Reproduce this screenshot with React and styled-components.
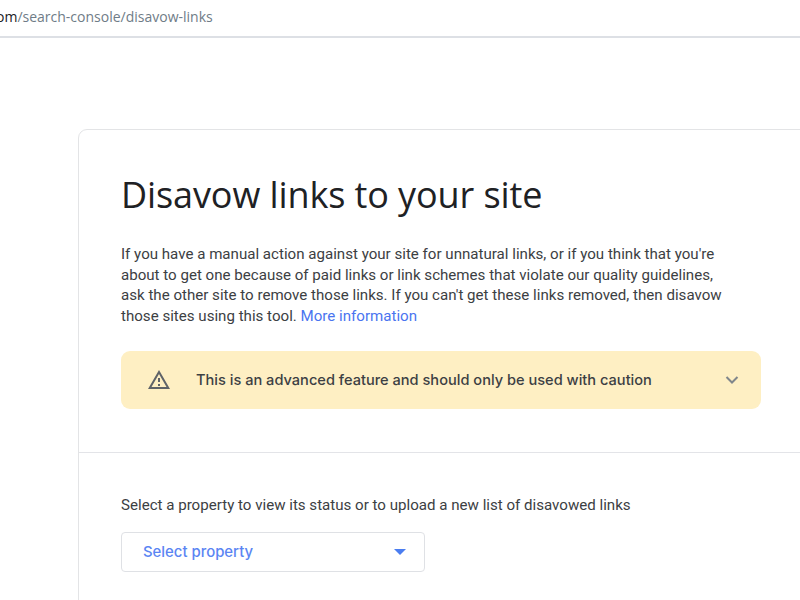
import React from 'react';
import styled, { createGlobalStyle } from 'styled-components';

const GlobalStyle = createGlobalStyle`
  html, body {
    margin: 0;
    height: 100%;
    overflow: hidden;
    background: #ffffff;
    font-family: Roboto, sans-serif;
  }
`;

const Page = styled.div`
  width: 800px;
  height: 600px;
  overflow: hidden;
`;

const AddressBar = styled.div`
  box-sizing: border-box;
  height: 38px;
  border-bottom: 2px solid #dde0e5;
  padding-top: 7px;
  overflow: hidden;
  white-space: nowrap;
  font-family: 'Open Sans', sans-serif;
  font-size: 14px;
  line-height: 20px;
`;

const Host = styled.span`
  display: inline-block;
  margin-left: -4px;
  color: #202124;
`;

const UrlPath = styled.span`
  color: #6f7c87;
`;

const Card = styled.main`
  box-sizing: border-box;
  width: 760px;
  height: 520px;
  margin: 91px 0 0 78px;
  border: 1px solid #e3e4e6;
  border-radius: 9px 0 0 0;
`;

const Intro = styled.section`
  box-sizing: border-box;
  height: 323px;
  padding: 41px 76px 0 42px;
  border-bottom: 1px solid #e3e4e8;
`;

const Title = styled.h1`
  margin: 0 0 25px;
  font-family: 'Open Sans', sans-serif;
  font-size: 36px;
  line-height: 48px;
  font-weight: 400;
  letter-spacing: -0.1px;
  color: #202124;
`;

const Body = styled.p`
  margin: 0 0 24px;
  font-size: 15.1px;
  line-height: 20.7px;
  white-space: nowrap;
  color: #3c4043;
`;

const MoreLink = styled.a`
  color: #4a74f0;
  text-decoration: none;
`;

const Warning = styled.div`
  box-sizing: border-box;
  height: 58px;
  display: flex;
  align-items: center;
  padding: 0 22px 0 26px;
  border-radius: 9px;
  background: #feefc3;
`;

const WarningText = styled.span`
  flex: 1;
  margin-left: 25px;
  font-family: Inter, sans-serif;
  font-size: 14.6px;
  font-weight: 500;
  color: #3c4043;
`;

const Selector = styled.section`
  padding: 42px 0 0 42px;
`;

const SelectLabel = styled.div`
  margin-bottom: 17px;
  font-size: 15.1px;
  line-height: 20px;
  color: #3c4043;
`;

const SelectBox = styled.div`
  box-sizing: border-box;
  width: 304px;
  height: 40px;
  display: flex;
  align-items: center;
  justify-content: space-between;
  padding: 0 18px 1px 21px;
  border: 1px solid #dfe1e5;
  border-radius: 4px;
  font-family: Inter, sans-serif;
  font-size: 14.9px;
  font-weight: 500;
  color: #5b85f3;
`;

const WarningIcon = () => (
  <svg width="24" height="24" viewBox="0 0 24 24" fill="#5f6368">
    <path d="M12 5.99 19.53 19H4.47L12 5.99M12 2 1 21h22L12 2zm1 14h-2v2h2v-2zm0-6h-2v4h2v-4z" />
  </svg>
);

const ChevronIcon = () => (
  <svg width="14" height="10" viewBox="0 0 14 10" fill="none" stroke="#80868b" strokeWidth="2">
    <path d="M1.5 2 7 7.5 12.5 2" />
  </svg>
);

const CaretIcon = () => (
  <svg width="12" height="6" viewBox="0 0 12 6" fill="#4a7df0">
    <path d="M0 0h12L6 6z" />
  </svg>
);

const App = () => (
  <Page>
    <GlobalStyle />
    <AddressBar>
      <Host>om</Host>
      <UrlPath>/search-console/disavow-links</UrlPath>
    </AddressBar>
    <Card>
      <Intro>
        <Title>Disavow links to your site</Title>
        <Body>
          If you have a manual action against your site for unnatural links, or if you think that you're
          <br />
          about to get one because of paid links or link schemes that violate our quality guidelines,
          <br />
          ask the other site to remove those links. If you can't get these links removed, then disavow
          <br />
          those sites using this tool. <MoreLink href="#">More information</MoreLink>
        </Body>
        <Warning>
          <WarningIcon />
          <WarningText>This is an advanced feature and should only be used with caution</WarningText>
          <ChevronIcon />
        </Warning>
      </Intro>
      <Selector>
        <SelectLabel>Select a property to view its status or to upload a new list of disavowed links</SelectLabel>
        <SelectBox>
          Select property
          <CaretIcon />
        </SelectBox>
      </Selector>
    </Card>
  </Page>
);

export default App;
